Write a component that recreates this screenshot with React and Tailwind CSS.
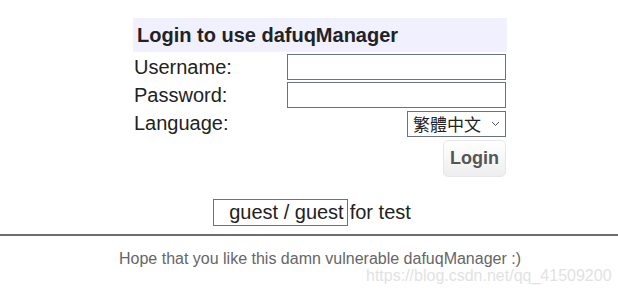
export default function App() {
  return (
    <div className="relative h-[294px] w-full overflow-hidden bg-white font-['Liberation_Sans',Arial,sans-serif] text-[#222]">
      <div className="flex flex-col items-center pl-[22px]">
        <div className="mt-[18px] w-[374px]">
          <div className="flex h-[34px] items-center bg-[#f0f0ff] px-[4px] text-[20px] font-bold">
            Login to use dafuqManager
          </div>
          <div className="mt-[2px] grid grid-cols-[154px_1fr] items-center">
            <span className="pl-[1px] text-[20px] leading-[23px]">Username:</span>
            <input className="h-[26px] w-[219px] border border-gray-500 bg-white px-1 outline-none" />
          </div>
          <div className="mt-[2px] grid grid-cols-[154px_1fr] items-center">
            <span className="pl-[1px] text-[20px] leading-[23px]">Password:</span>
            <input type="password" className="h-[26px] w-[219px] border border-gray-500 bg-white px-1 outline-none" />
          </div>
          <div className="mt-[3px] flex items-center justify-between pr-[1px]">
            <span className="-mt-[2px] pl-[1px] text-[20px] leading-[23px]">Language:</span>
            <div className="relative h-[26px] w-[99px] border border-gray-500 bg-white">
              <span className="absolute left-[5px] top-[1px] font-['Noto_Sans_CJK_TC',sans-serif] text-[17px] leading-[22px] text-[#222]">
                繁體中文
              </span>
              <svg className="absolute right-[5px] top-[9px]" width="9" height="6" viewBox="0 0 9 6" fill="none">
                <path d="M1 1l3.5 3.5L8 1" stroke="#555" strokeWidth="1" />
              </svg>
            </div>
          </div>
          <div className="mt-[3px] flex justify-end pr-[1px]">
            <button className="h-[37px] w-[63px] rounded-[5px] border border-gray-200 bg-gradient-to-b from-white to-[#eeeeee] text-[18px] font-bold text-[#555]">
              Login
            </button>
          </div>
        </div>
      </div>

      <div className="mt-[22px] flex justify-center pl-[6px] text-[20px] leading-[27px]">
        <span className="inline-block h-[27px] pl-[16px] pr-[4px] leading-[27px] shadow-[inset_0_0_0_1px_#f23a3a]">
          guest / guest
        </span>
        <span className="ml-[2px]">for test</span>
      </div>

      <div className="mt-[8px] h-[2px] w-full bg-[#6e6e6e]" />

      <div className="mt-[14px] pl-[22px] text-center text-[16px] leading-[18px] text-[#666]">
        Hope that you like this damn vulnerable dafuqManager :)
      </div>

      <div className="absolute left-[366px] top-[267px] text-[16px] leading-[18px] text-[#e2e2e2]">
        https://blog.csdn.net/qq_41509200
      </div>
    </div>
  );
}
